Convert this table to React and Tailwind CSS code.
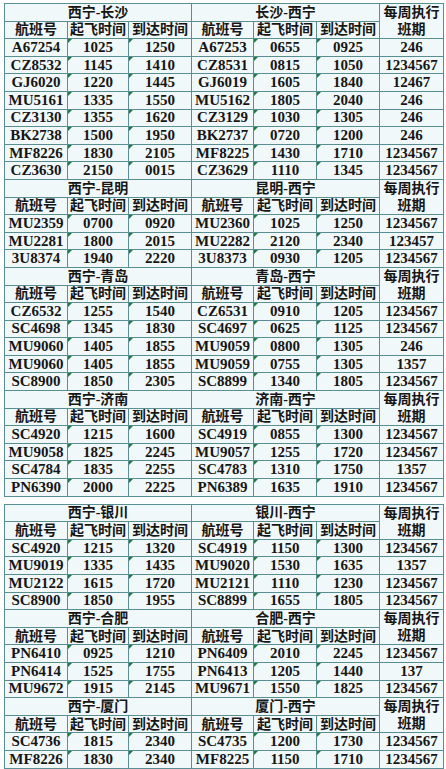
import React from 'react';

const tableOne = [
  {
    out: '西宁-长沙',
    back: '长沙-西宁',
    rows: [
      ['A67254', '1025', '1250', 'A67253', '0655', '0925', '246'],
      ['CZ8532', '1145', '1410', 'CZ8531', '0815', '1050', '1234567'],
      ['GJ6020', '1220', '1445', 'GJ6019', '1605', '1840', '12467'],
      ['MU5161', '1335', '1550', 'MU5162', '1805', '2040', '246'],
      ['CZ3130', '1355', '1620', 'CZ3129', '1030', '1305', '246'],
      ['BK2738', '1500', '1950', 'BK2737', '0720', '1200', '246'],
      ['MF8226', '1830', '2105', 'MF8225', '1430', '1710', '1234567'],
      ['CZ3630', '2150', '0015', 'CZ3629', '1110', '1345', '1234567'],
    ],
  },
  {
    out: '西宁-昆明',
    back: '昆明-西宁',
    rows: [
      ['MU2359', '0700', '0920', 'MU2360', '1025', '1250', '1234567'],
      ['MU2281', '1800', '2015', 'MU2282', '2120', '2340', '123457'],
      ['3U8374', '1940', '2220', '3U8373', '0930', '1205', '1234567'],
    ],
  },
  {
    out: '西宁-青岛',
    back: '青岛-西宁',
    rows: [
      ['CZ6532', '1255', '1540', 'CZ6531', '0910', '1205', '1234567'],
      ['SC4698', '1345', '1830', 'SC4697', '0625', '1125', '1234567'],
      ['MU9060', '1405', '1855', 'MU9059', '0800', '1305', '246'],
      ['MU9060', '1405', '1855', 'MU9059', '0755', '1305', '1357'],
      ['SC8900', '1850', '2305', 'SC8899', '1340', '1805', '1234567'],
    ],
  },
  {
    out: '西宁-济南',
    back: '济南-西宁',
    rows: [
      ['SC4920', '1215', '1600', 'SC4919', '0855', '1300', '1234567'],
      ['MU9058', '1825', '2245', 'MU9057', '1255', '1720', '1234567'],
      ['SC4784', '1835', '2255', 'SC4783', '1310', '1750', '1357'],
      ['PN6390', '2000', '2225', 'PN6389', '1635', '1910', '1234567'],
    ],
  },
];

const tableTwo = [
  {
    out: '西宁-银川',
    back: '银川-西宁',
    rows: [
      ['SC4920', '1215', '1320', 'SC4919', '1150', '1300', '1234567'],
      ['MU9019', '1335', '1435', 'MU9020', '1530', '1635', '1357'],
      ['MU2122', '1615', '1720', 'MU2121', '1110', '1230', '1234567'],
      ['SC8900', '1850', '1955', 'SC8899', '1655', '1805', '1234567'],
    ],
  },
  {
    out: '西宁-合肥',
    back: '合肥-西宁',
    rows: [
      ['PN6410', '0925', '1210', 'PN6409', '2010', '2245', '1234567'],
      ['PN6414', '1525', '1755', 'PN6413', '1205', '1440', '137'],
      ['MU9672', '1915', '2145', 'MU9671', '1550', '1825', '1234567'],
    ],
  },
  {
    out: '西宁-厦门',
    back: '厦门-西宁',
    rows: [
      ['SC4736', '1815', '2340', 'SC4735', '1200', '1730', '1234567'],
      ['MF8226', '1830', '2340', 'MF8225', '1150', '1710', '1234567'],
    ],
  },
];

const cell = 'border border-[#5a8e95] p-0 h-[17.6px] text-center align-middle whitespace-nowrap leading-[15px]';
const timeCols = [1, 2, 4, 5];

const Section = ({ section }) => (
  <>
    <tr>
      <td colSpan={3} className={`${cell} text-[14px]`}>{section.out}</td>
      <td colSpan={3} className={`${cell} text-[14px]`}>{section.back}</td>
      <td rowSpan={2} className={`${cell} text-[14px]`}>
        <div className="leading-[17px]">每周执行</div>
        <div className="leading-[17px]">班期</div>
      </td>
    </tr>
    <tr>
      <td className={`${cell} text-[14px]`}>航班号</td>
      <td className={`${cell} text-[14px]`}>起飞时间</td>
      <td className={`${cell} text-[14px]`}>到达时间</td>
      <td className={`${cell} text-[14px]`}>航班号</td>
      <td className={`${cell} text-[14px]`}>起飞时间</td>
      <td className={`${cell} text-[14px]`}>到达时间</td>
    </tr>
    {section.rows.map((row, i) => (
      <tr key={i}>
        {row.map((v, j) => (
          <td key={j} className={`${cell} relative text-[15px]`}>
            {timeCols.includes(j) && (
              <span className="absolute left-0 top-0 h-0 w-0 border-t-[4px] border-r-[4px] border-t-[#1f7a4a] border-r-transparent" />
            )}
            {v}
          </td>
        ))}
      </tr>
    ))}
  </>
);

const Schedule = ({ sections }) => (
  <table className="ml-[4px] w-[439px] table-fixed border-collapse bg-[#f1f8f9]">
    <colgroup>
      <col className="w-[63px]" />
      <col className="w-[61px]" />
      <col className="w-[63px]" />
      <col className="w-[62px]" />
      <col className="w-[63px]" />
      <col className="w-[63px]" />
      <col className="w-[64px]" />
    </colgroup>
    <tbody>
      {sections.map((s, i) => (
        <Section key={i} section={s} />
      ))}
    </tbody>
  </table>
);

export default function App() {
  return (
    <div
      className="w-[446px] h-[769px] overflow-hidden bg-white pt-[3px] font-bold text-[#161616]"
      style={{ fontFamily: '"Liberation Serif", "Noto Sans CJK SC", serif' }}
    >
      <Schedule sections={tableOne} />
      <div className="h-[7px]" />
      <Schedule sections={tableTwo} />
    </div>
  );
}
